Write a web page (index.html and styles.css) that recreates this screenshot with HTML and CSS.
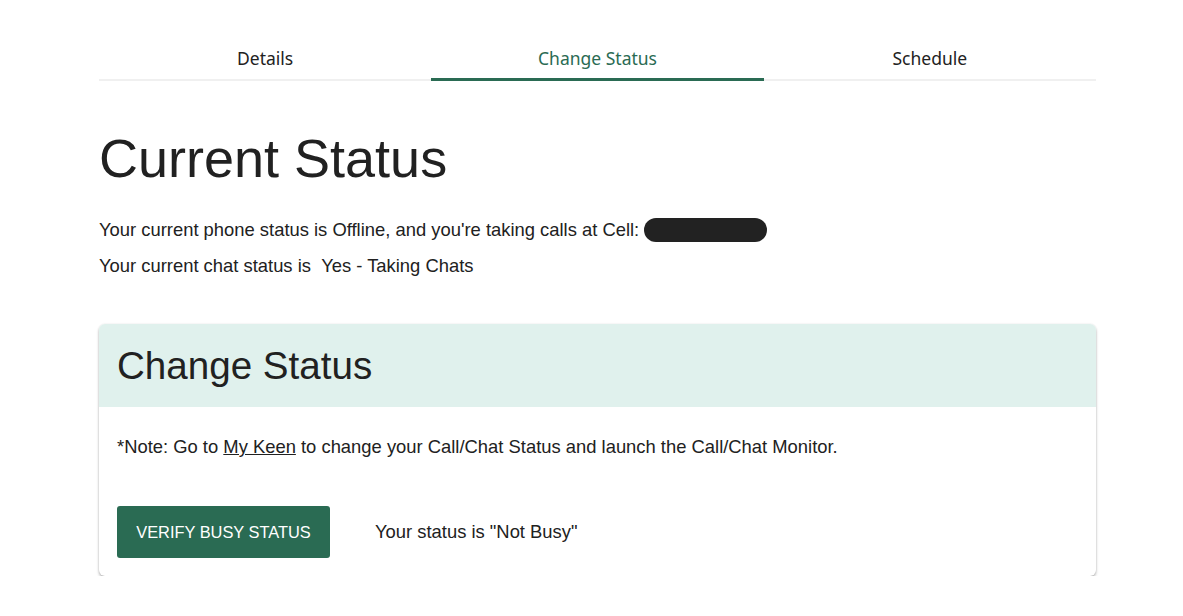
FILE: index.html
```html
<!DOCTYPE html>
<html>
<head>
<meta charset="utf-8">
<link rel="stylesheet" href="styles.css">
</head>
<body>
<div class="page">
  <nav class="tabs">
    <div class="tab">Details</div>
    <div class="tab active">Change Status</div>
    <div class="tab">Schedule</div>
  </nav>
  <h1 class="title">Current Status</h1>
  <p class="line">Your current phone status is Offline, and you're taking calls at Cell: <span class="redact"></span></p>
  <p class="line">Your current chat status is &nbsp;Yes - Taking Chats</p>
  <section class="card">
    <header class="card-head"><h2>Change Status</h2></header>
    <div class="card-body">
      <p class="note">*Note: Go to <a href="#">My Keen</a> to change your Call/Chat Status and launch the Call/Chat Monitor.</p>
      <div class="actions">
        <button class="btn">VERIFY BUSY STATUS</button>
        <span class="busy">Your status is "Not Busy"</span>
      </div>
    </div>
  </section>
</div>
</body>
</html>
```
FILE: styles.css
```css
* { box-sizing: border-box; }
body {
  margin: 0;
  background: #fff;
  font-family: "Liberation Sans", Arial, sans-serif;
  color: #212121;
}
.page {
  width: 997px;
  margin: 0 0 0 99px;
  padding-top: 36px;
}
.tabs {
  display: flex;
  border-bottom: 2px solid #f0f0f0;
}
.tab {
  flex: 1;
  text-align: center;
  font-family: "Noto Sans", sans-serif;
  font-size: 17.5px;
  font-weight: 400;
  color: #222;
  height: 43px;
  line-height: 45px;
}
.tab.active {
  color: #2a6b53;
  border-bottom: 3px solid #2a6b53;
  margin-bottom: -2px;
  height: 45px;
}
.title {
  font-weight: normal;
  font-size: 54px;
  margin: 47px 0 0;
  line-height: 60px;
}
.line {
  font-size: 18.4px;
  margin: 0;
  line-height: 36px;
}
.title + .line { margin-top: 24px; }
.redact {
  display: inline-block;
  width: 123px;
  height: 24px;
  background: #222;
  border-radius: 12px;
  vertical-align: -6px;
}
.card {
  margin-top: 40px;
  border-radius: 6px;
  box-shadow: 0 2px 3px rgba(0,0,0,0.28), 0 0 2px rgba(0,0,0,0.1);
  overflow: hidden;
}
.card-head {
  background: #e0f1ed;
  height: 83px;
  padding: 0 18px;
  display: flex;
  align-items: center;
}
.card-head h2 {
  margin: 0;
  font-weight: normal;
  font-size: 38.6px;
}
.card-body {
  padding: 28px 18px 18px;
}
.note {
  margin: 0;
  font-size: 18.4px;
  line-height: 24px;
}
.note a { color: #212121; }
.actions {
  margin-top: 47px;
  display: flex;
  align-items: center;
  gap: 45px;
}
.btn {
  background: #2a6b53;
  color: #fff;
  border: none;
  border-radius: 3px;
  font-family: "Liberation Sans", Arial, sans-serif;
  font-size: 16.4px;
  height: 52px;
  width: 213px;
  padding: 0;
}
.busy { font-size: 18.4px; }
```
